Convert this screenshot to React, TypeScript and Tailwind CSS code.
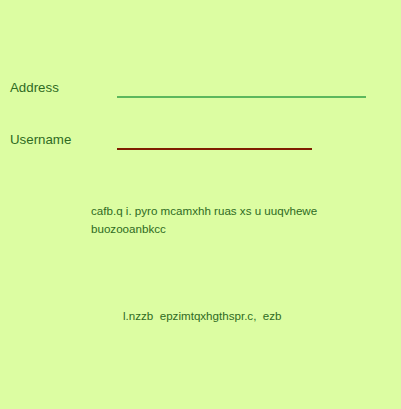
import React from "react";

export default function App() {
  return (
    <div className="w-[401px] h-[409px] bg-[#dcfda2] text-[#2f6b22] overflow-hidden" style={{ fontFamily: '"Liberation Sans", Arial, sans-serif' }}>
      <div className="pt-[80px] pl-[10px] flex flex-col gap-[36px]">
        <div className="flex items-start h-[16px]">
          <div className="w-[107px] text-[13.3px] leading-[16px]">Address</div>
          <div className="mt-[16px] w-[249px] h-[2px] bg-[#5cb85c]" />
        </div>
        <div className="flex items-start h-[16px]">
          <div className="w-[107px] text-[13.3px] leading-[16px]">Username</div>
          <div className="mt-[16px] w-[195px] h-[2px] bg-[#7f1d00]" />
        </div>
      </div>
      <div className="mt-[54px] ml-[91px] w-[240px] text-[11.6px] leading-[18px]">
        cafb.q i. pyro mcamxhh ruas xs u uuqvhewe buozooanbkcc
      </div>
      <div className="mt-[69px] ml-[123px] text-[11.6px] leading-[18px] whitespace-pre">
        {"l.nzzb  epzimtqxhgthspr.c,  ezb"}
      </div>
    </div>
  );
}
